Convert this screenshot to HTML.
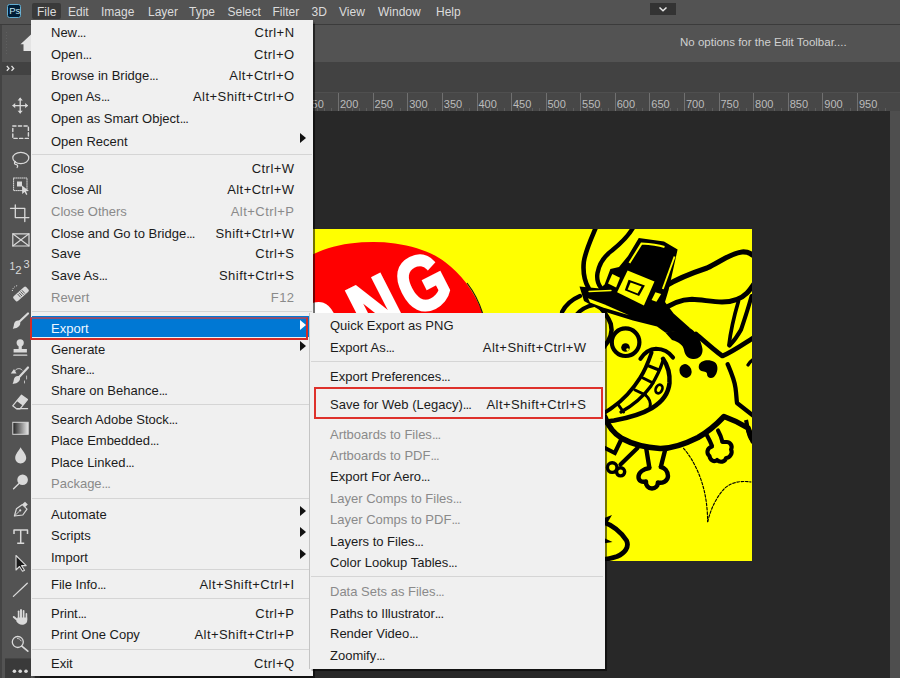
<!DOCTYPE html>
<html><head><meta charset="utf-8">
<style>
*{box-sizing:border-box;margin:0;padding:0}
html,body{width:900px;height:678px;overflow:hidden;background:#282828;font-family:"Liberation Sans",sans-serif}
.a{position:absolute}
.t{position:absolute;white-space:nowrap;font-family:"Liberation Sans",sans-serif}
.sep{position:absolute;height:1px;background:#d5d5d5}
.arr{position:absolute;width:0;height:0;border-top:5px solid transparent;border-bottom:5px solid transparent;border-left:6px solid #111}
.mb{position:absolute;top:0;font-size:12px;line-height:16px;color:#dcdcdc;white-space:nowrap}
.rl{position:absolute;top:98px;font-size:11px;line-height:13px;color:#bcbcbc;white-space:nowrap}
.tk{position:absolute;width:1px;background:#707070}
</style></head><body>
<!-- menubar -->
<div class="a" style="left:0;top:0;width:900px;height:24px;background:#535353"></div>
<div class="a" style="left:0;top:24px;width:900px;height:1px;background:#3b3b3b"></div>
<!-- ps logo -->
<div class="a" style="left:7px;top:4px;width:14px;height:14px;background:#001e36;border:1.2px solid #62aed2;border-radius:2.5px"></div>
<div class="t" style="left:9.3px;top:4px;font-size:9.5px;line-height:14px;color:#c4e8f6;letter-spacing:-0.1px">Ps</div>
<!-- File highlight -->
<div class="a" style="left:32px;top:3px;width:29px;height:16px;background:#3a3a3a;border-radius:2px"></div>
<div class="mb" style="left:37px;top:4px">File</div>
<div class="mb" style="left:68px;top:4px">Edit</div>
<div class="mb" style="left:101px;top:4px">Image</div>
<div class="mb" style="left:148px;top:4px">Layer</div>
<div class="mb" style="left:189px;top:4px">Type</div>
<div class="mb" style="left:227.5px;top:4px">Select</div>
<div class="mb" style="left:272.5px;top:4px">Filter</div>
<div class="mb" style="left:311.5px;top:4px">3D</div>
<div class="mb" style="left:339px;top:4px">View</div>
<div class="mb" style="left:378px;top:4px">Window</div>
<div class="mb" style="left:436px;top:4px">Help</div>
<!-- workspace dropdown -->
<div class="a" style="left:650px;top:3px;width:26px;height:12px;background:#333"></div>
<svg class="a" style="left:650px;top:3px" width="26" height="12"><path d="M9.5 4.5 L13 7.8 L16.5 4.5" stroke="#e8e8e8" stroke-width="1.5" fill="none"/></svg>

<!-- options bar -->
<div class="a" style="left:0;top:25px;width:900px;height:37px;background:#535353"></div>
<div class="t" style="left:680px;top:35px;font-size:11.5px;line-height:14px;color:#d0d0d0">No options for the Edit Toolbar....</div>
<!-- band -->
<div class="a" style="left:0;top:62px;width:900px;height:30px;background:#424242"></div>
<!-- ruler -->
<div class="a" style="left:0;top:92px;width:900px;height:19px;background:#474747"></div>
<div class="a" style="left:0;top:92px;width:900px;height:1px;background:#4f4f4f"></div>
<div class="tk" style="left:303.5px;top:93px;height:18px"></div>
<div class="rl" style="left:305.4px">150</div>
<div class="tk" style="left:310.3px;top:108px;height:3px;background:#5c5c5c"></div>
<div class="tk" style="left:317.2px;top:108px;height:3px;background:#5c5c5c"></div>
<div class="tk" style="left:324.2px;top:108px;height:3px;background:#5c5c5c"></div>
<div class="tk" style="left:331.1px;top:108px;height:3px;background:#5c5c5c"></div>
<div class="tk" style="left:338.1px;top:93px;height:18px"></div>
<div class="rl" style="left:340.0px">200</div>
<div class="tk" style="left:344.9px;top:108px;height:3px;background:#5c5c5c"></div>
<div class="tk" style="left:351.8px;top:108px;height:3px;background:#5c5c5c"></div>
<div class="tk" style="left:358.8px;top:108px;height:3px;background:#5c5c5c"></div>
<div class="tk" style="left:365.7px;top:108px;height:3px;background:#5c5c5c"></div>
<div class="tk" style="left:372.7px;top:93px;height:18px"></div>
<div class="rl" style="left:374.6px">250</div>
<div class="tk" style="left:379.5px;top:108px;height:3px;background:#5c5c5c"></div>
<div class="tk" style="left:386.4px;top:108px;height:3px;background:#5c5c5c"></div>
<div class="tk" style="left:393.3px;top:108px;height:3px;background:#5c5c5c"></div>
<div class="tk" style="left:400.3px;top:108px;height:3px;background:#5c5c5c"></div>
<div class="tk" style="left:407.3px;top:93px;height:18px"></div>
<div class="rl" style="left:409.2px">300</div>
<div class="tk" style="left:414.1px;top:108px;height:3px;background:#5c5c5c"></div>
<div class="tk" style="left:421.0px;top:108px;height:3px;background:#5c5c5c"></div>
<div class="tk" style="left:427.9px;top:108px;height:3px;background:#5c5c5c"></div>
<div class="tk" style="left:434.9px;top:108px;height:3px;background:#5c5c5c"></div>
<div class="tk" style="left:441.9px;top:93px;height:18px"></div>
<div class="rl" style="left:443.8px">350</div>
<div class="tk" style="left:448.7px;top:108px;height:3px;background:#5c5c5c"></div>
<div class="tk" style="left:455.6px;top:108px;height:3px;background:#5c5c5c"></div>
<div class="tk" style="left:462.5px;top:108px;height:3px;background:#5c5c5c"></div>
<div class="tk" style="left:469.4px;top:108px;height:3px;background:#5c5c5c"></div>
<div class="tk" style="left:476.5px;top:93px;height:18px"></div>
<div class="rl" style="left:478.4px">400</div>
<div class="tk" style="left:483.3px;top:108px;height:3px;background:#5c5c5c"></div>
<div class="tk" style="left:490.2px;top:108px;height:3px;background:#5c5c5c"></div>
<div class="tk" style="left:497.1px;top:108px;height:3px;background:#5c5c5c"></div>
<div class="tk" style="left:504.0px;top:108px;height:3px;background:#5c5c5c"></div>
<div class="tk" style="left:511.1px;top:93px;height:18px"></div>
<div class="rl" style="left:513.0px">450</div>
<div class="tk" style="left:517.9px;top:108px;height:3px;background:#5c5c5c"></div>
<div class="tk" style="left:524.8px;top:108px;height:3px;background:#5c5c5c"></div>
<div class="tk" style="left:531.7px;top:108px;height:3px;background:#5c5c5c"></div>
<div class="tk" style="left:538.6px;top:108px;height:3px;background:#5c5c5c"></div>
<div class="tk" style="left:545.6px;top:93px;height:18px"></div>
<div class="rl" style="left:547.5px">500</div>
<div class="tk" style="left:552.5px;top:108px;height:3px;background:#5c5c5c"></div>
<div class="tk" style="left:559.4px;top:108px;height:3px;background:#5c5c5c"></div>
<div class="tk" style="left:566.3px;top:108px;height:3px;background:#5c5c5c"></div>
<div class="tk" style="left:573.2px;top:108px;height:3px;background:#5c5c5c"></div>
<div class="tk" style="left:580.2px;top:93px;height:18px"></div>
<div class="rl" style="left:582.1px">550</div>
<div class="tk" style="left:587.0px;top:108px;height:3px;background:#5c5c5c"></div>
<div class="tk" style="left:594.0px;top:108px;height:3px;background:#5c5c5c"></div>
<div class="tk" style="left:600.9px;top:108px;height:3px;background:#5c5c5c"></div>
<div class="tk" style="left:607.8px;top:108px;height:3px;background:#5c5c5c"></div>
<div class="tk" style="left:614.8px;top:93px;height:18px"></div>
<div class="rl" style="left:616.7px">600</div>
<div class="tk" style="left:621.6px;top:108px;height:3px;background:#5c5c5c"></div>
<div class="tk" style="left:628.6px;top:108px;height:3px;background:#5c5c5c"></div>
<div class="tk" style="left:635.5px;top:108px;height:3px;background:#5c5c5c"></div>
<div class="tk" style="left:642.4px;top:108px;height:3px;background:#5c5c5c"></div>
<div class="tk" style="left:649.4px;top:93px;height:18px"></div>
<div class="rl" style="left:651.3px">650</div>
<div class="tk" style="left:656.2px;top:108px;height:3px;background:#5c5c5c"></div>
<div class="tk" style="left:663.1px;top:108px;height:3px;background:#5c5c5c"></div>
<div class="tk" style="left:670.1px;top:108px;height:3px;background:#5c5c5c"></div>
<div class="tk" style="left:677.0px;top:108px;height:3px;background:#5c5c5c"></div>
<div class="tk" style="left:684.0px;top:93px;height:18px"></div>
<div class="rl" style="left:685.9px">700</div>
<div class="tk" style="left:690.8px;top:108px;height:3px;background:#5c5c5c"></div>
<div class="tk" style="left:697.7px;top:108px;height:3px;background:#5c5c5c"></div>
<div class="tk" style="left:704.7px;top:108px;height:3px;background:#5c5c5c"></div>
<div class="tk" style="left:711.6px;top:108px;height:3px;background:#5c5c5c"></div>
<div class="tk" style="left:718.6px;top:93px;height:18px"></div>
<div class="rl" style="left:720.5px">750</div>
<div class="tk" style="left:725.4px;top:108px;height:3px;background:#5c5c5c"></div>
<div class="tk" style="left:732.3px;top:108px;height:3px;background:#5c5c5c"></div>
<div class="tk" style="left:739.2px;top:108px;height:3px;background:#5c5c5c"></div>
<div class="tk" style="left:746.2px;top:108px;height:3px;background:#5c5c5c"></div>
<div class="tk" style="left:753.2px;top:93px;height:18px"></div>
<div class="rl" style="left:755.1px">800</div>
<div class="tk" style="left:760.0px;top:108px;height:3px;background:#5c5c5c"></div>
<div class="tk" style="left:766.9px;top:108px;height:3px;background:#5c5c5c"></div>
<div class="tk" style="left:773.8px;top:108px;height:3px;background:#5c5c5c"></div>
<div class="tk" style="left:780.8px;top:108px;height:3px;background:#5c5c5c"></div>
<div class="tk" style="left:787.8px;top:93px;height:18px"></div>
<div class="rl" style="left:789.7px">850</div>
<div class="tk" style="left:794.6px;top:108px;height:3px;background:#5c5c5c"></div>
<div class="tk" style="left:801.5px;top:108px;height:3px;background:#5c5c5c"></div>
<div class="tk" style="left:808.4px;top:108px;height:3px;background:#5c5c5c"></div>
<div class="tk" style="left:815.3px;top:108px;height:3px;background:#5c5c5c"></div>
<div class="tk" style="left:822.4px;top:93px;height:18px"></div>
<div class="rl" style="left:824.3px">900</div>
<div class="tk" style="left:829.2px;top:108px;height:3px;background:#5c5c5c"></div>
<div class="tk" style="left:836.1px;top:108px;height:3px;background:#5c5c5c"></div>
<div class="tk" style="left:843.0px;top:108px;height:3px;background:#5c5c5c"></div>
<div class="tk" style="left:849.9px;top:108px;height:3px;background:#5c5c5c"></div>
<div class="tk" style="left:857.0px;top:93px;height:18px"></div>
<div class="rl" style="left:858.9px">950</div>
<div class="tk" style="left:863.8px;top:108px;height:3px;background:#5c5c5c"></div>
<div class="tk" style="left:870.7px;top:108px;height:3px;background:#5c5c5c"></div>
<div class="tk" style="left:877.6px;top:108px;height:3px;background:#5c5c5c"></div>
<div class="tk" style="left:884.5px;top:108px;height:3px;background:#5c5c5c"></div>

<!-- canvas right strip -->
<div class="a" style="left:890px;top:111px;width:10px;height:567px;background:#4e4e4e"></div>

<!-- left toolbar -->
<div class="a" style="left:0;top:25px;width:2px;height:653px;background:#434343"></div>
<svg class="a" style="left:0;top:25px" width="31" height="37"><path d="M6.5 7V29" stroke="#5f5f5f" stroke-width="1" stroke-dasharray="1 2"/><path d="M20.5 19.3L31 9.5L41.5 19.3H38.5V26H23.5V19.3Z" fill="#e4e4e4"/></svg>
<div class="a" style="left:2px;top:62px;width:38px;height:13px;background:#424242"></div>
<svg class="a" style="left:0;top:62px" width="31" height="13"><path d="M6.8 4L9 6.4L6.8 8.8M11.5 4L13.7 6.4L11.5 8.8" stroke="#e0e0e0" stroke-width="1.3" fill="none"/></svg>
<div class="a" style="left:2px;top:75px;width:38px;height:603px;background:#535353"></div>
<svg class="a" style="left:0;top:0" width="31" height="678" viewBox="0 0 31 678">
<g fill="none" stroke="#dadada" stroke-width="1.3" stroke-linecap="round" stroke-linejoin="round">
<!-- move -->
<path d="M20.2 98.5V112.8M13 105.6H27.4"/>
<path d="M20.2 97.6l-2.6 2.8h5.2zM20.2 113.6l-2.6-2.8h5.2zM12.4 105.6l2.8-2.6v5.2zM28 105.6l-2.8-2.6v5.2z" fill="#dadada" stroke="none"/>
<!-- marquee -->
<rect x="12.8" y="126" width="15.6" height="12.4" stroke-dasharray="3.2 2.4" stroke-width="1.4"/>
<!-- lasso -->
<ellipse cx="20.8" cy="158" rx="8" ry="5.6" stroke-width="1.2"/>
<path d="M15.5 161.5c-2 1.5-1 3 .8 3.2c1.5.2 1.8 1.5.8 2.8" stroke-width="1.2"/>
<!-- object select -->
<rect x="13.6" y="178" width="13.4" height="12.6" stroke-dasharray="1 1.1" stroke-width="1"/>
<path d="M17 181.5h5v5h-5z" fill="#dadada" stroke="none"/>
<path d="M22 185.5l7 5.5l-3.2.3l1.6 3l-1.2.6l-1.6-3l-2.4 2.2z" fill="#dadada" stroke="none"/>
<!-- crop -->
<path d="M10.5 208.3H24.8V221.5M15.3 205V217.6H28.9" stroke-width="1.3"/>
<!-- frame -->
<rect x="12.8" y="233.8" width="16.2" height="12.2" stroke-width="1.2"/>
<path d="M12.8 233.8L29 246M29 233.8L12.8 246" stroke-width="1.1"/>
<!-- brush -->
<path d="M28 313.5L19.5 321.5" stroke-width="2.2"/>
<path d="M19.8 320.8c-3 -1 -5.5 1 -5.8 3.5c-.3 2 -.8 3.6 -1.2 4.6c1.5-.3 3.3-.6 4.9-1.6c2.4-1.4 3.3-3.9 2.1-6.5z" fill="#dadada" stroke="none"/>
<!-- stamp -->
<circle cx="20.2" cy="342.8" r="3.6" fill="#dadada" stroke="none"/>
<path d="M18.6 345.5h3.2v3.8h-3.2z" fill="#dadada" stroke="none"/>
<path d="M13.6 349h13.3v3.6h-13.3z" fill="#dadada" stroke="none"/>
<path d="M13.8 355.2H26.8" stroke-width="1.2"/>
<!-- history brush -->
<path d="M28 367.5L19.2 377" stroke-width="2.2"/>
<path d="M19.5 376.2c-3-1-5.4 1-5.7 3.5c-.3 2-.8 3.3-1.2 4.3c1.5-.3 3.3-.6 4.9-1.6c2.4-1.4 3.3-3.7 2-6.2z" fill="#dadada" stroke="none"/>
<path d="M10.8 373.6l3.2-4.5l2.5 4.5z" fill="#dadada" stroke="none"/>
<path d="M15 370.5c2-2.5 5.5-2.5 7-.5" stroke-width="1"/>
<path d="M26.6 376v3M24.5 381v2" stroke-width="0.8"/>
<!-- eraser -->
<path d="M21.5 395.2l6 4.3l-7.5 9.3h-3.5l-3.8-3z" stroke-width="1.2"/>
<path d="M21.5 395.2l6 4.3l-4.8 6l-6-4.4z" fill="#dadada" stroke="none"/>
<path d="M17 408.6H27.6" stroke-width="1.2"/>
<!-- type T -->
<path d="M14 534v-4h13.5v4M20.7 530v13.3M17.2 543.3h7" stroke-width="1.5" stroke-linecap="butt"/>
<!-- path select arrow -->
<path d="M16 555.5v14.5l3.5-3.5l3 4.8l2-1.1l-3-4.6h4.7z" fill="#1a1a1a" stroke="#dadada" stroke-width="1.1"/>
<!-- line -->
<path d="M27.3 583.3L13.4 596.4" stroke-width="1.3"/>
<!-- zoom -->
<circle cx="17.8" cy="642" r="5.5" stroke-width="1.3"/>
<path d="M21.8 646.2l6 5" stroke-width="1.7"/>
<path d="M17.5 638.5c1.6 0 3 1 3.6 2.4" stroke-width="0.9"/>
</g>
<!-- 123 -->
<text x="9.6" y="269.8" font-family="Liberation Sans" font-size="10.5" fill="#dadada">1</text>
<text x="15.2" y="273.9" font-family="Liberation Sans" font-size="11.5" fill="#dadada">2</text>
<text x="23.6" y="267.7" font-family="Liberation Sans" font-size="11" fill="#dadada">3</text>
<!-- bandage -->
<g transform="translate(21,294) rotate(-42)">
<rect x="-8.5" y="-3.2" width="17" height="6.4" rx="1.5" fill="#dadada"/>
<path d="M-2.5 -2.2v4.4M-.6 -2.2v4.4M1.3 -2.2v4.4M3.2 -2.2v4.4" stroke="#535353" stroke-width="0.9"/>
</g>
<path d="M12.3 291c.3-3 2.6-5.2 5.8-5.5" fill="none" stroke="#dadada" stroke-width="1" stroke-dasharray="1 1.2"/>
<!-- gradient -->
<defs><linearGradient id="gr" x1="0" x2="1"><stop offset="0" stop-color="#222"/><stop offset="1" stop-color="#e6e6e6"/></linearGradient></defs>
<rect x="12.8" y="422.3" width="15.4" height="12" fill="url(#gr)" stroke="#d8d8d8" stroke-width="1"/>
<!-- drop -->
<path d="M20.6 447.2c-1.5 3-5.4 7-5.4 10.5c0 3.3 2.4 5.7 5.4 5.7s5.6-2.4 5.6-5.7c0-3.5-4-7.5-5.6-10.5z" fill="#dadada"/>
<!-- dodge -->
<circle cx="22.6" cy="479.8" r="5.3" fill="#dadada"/>
<path d="M19 483.6l-5.4 5.2" stroke="#dadada" stroke-width="1.4" stroke-linecap="round"/>
<!-- pen -->
<path d="M14.4 516l2-7.2l6-4.2l4.6 4.5l-4.2 5.9z" fill="none" stroke="#dadada" stroke-width="1.2" stroke-linejoin="round"/>
<path d="M22.3 504.3l2.7-2.6l2.8 2.8l-2.6 2.6z" fill="#dadada"/>
<circle cx="20.2" cy="510.4" r="1.1" fill="#dadada"/>
<path d="M14.6 515.8l5-4.8" stroke="#dadada" stroke-width="0.9"/>
<!-- hand -->
<g stroke="#dadada" stroke-linecap="round" fill="none">
<path d="M18.6 611.2V619" stroke-width="1.6"/>
<path d="M21 610V618.5" stroke-width="1.9"/>
<path d="M23.6 610.9V618.5" stroke-width="1.7"/>
<path d="M26.4 613.8V620" stroke-width="1.6"/>
<path d="M13.8 617L18 620.5" stroke-width="2"/>
</g>
<path d="M17.5 617.5H27.2V620.5C27.2 623 25 624.8 22 624.8C19.5 624.8 17.8 623.5 16.3 621.3z" fill="#dadada"/>
<!-- ... -->
<rect x="5" y="658.4" width="26" height="20" fill="#3a3a3a"/>
<circle cx="14.4" cy="671.2" r="1.8" fill="#dadada"/><circle cx="20.2" cy="671.2" r="1.8" fill="#dadada"/><circle cx="26" cy="671.2" r="1.8" fill="#dadada"/>
</svg>


<!-- image -->
<svg class="a" style="left:300px;top:229px" width="452" height="332" viewBox="300 229 452 332">
<rect x="300" y="229" width="452" height="332" fill="#ffff00"/>
<!-- red circle -->
<path d="M300 262 C310 254 330 246 350 243.5 C365 241.8 380 241.5 395 243.5 C415 246.5 432 252 445 262 C460 273 474 290 482.5 313 L482.5 330 L300 330 Z" fill="#ff0000"/>
<path d="M467 283 C474 292 479 302 482.5 313" fill="none" stroke="#111" stroke-width="1.1"/>
<!-- PNG text -->
<g fill="#fff" stroke="#fff" stroke-width="2.8" font-family="Liberation Sans" font-weight="bold" font-size="78"><text transform="translate(314,364) rotate(-27) scale(0.8,1)">P</text><text transform="translate(367,341) rotate(-27) scale(0.82,1)">N</text><text transform="translate(413,318) rotate(-27) scale(0.8,1)">G</text></g>

<g fill="none" stroke="#000" stroke-linecap="round" stroke-linejoin="round">
<!-- left arcs bottom -->
<path d="M562 312 C566 304 573 299 580 296" stroke-width="4.3"/>
<path d="M575 316 C580 310 587 306 594 305" stroke-width="3.9"/>
<!-- long strokes -->
<path d="M596.5 226 C592 237 585.5 250 583.8 262 C582.8 272 584.5 281 588.5 288" stroke-width="4.6"/>
<path d="M634 226 C629 236 620 244 612 250.5 C603 257 599 265 597.5 273 C596.5 279 598 284 601 288" stroke-width="4.4"/>
<!-- ear outline top -->
<path d="M665.5 286 C677 279 692 273 707 268 C720 262 731 253 742 252 C748 251.5 752 254 755 257" stroke-width="5.2"/>
<!-- ear outline bottom -->
<path d="M660 312 C670 304 681 299.5 692 299.3 C702 299.6 712 302 722 302 C732 302 741 299 747 293 C750 290 752 287 754 284" stroke-width="5"/>
<!-- body top diagonal -->
<path d="M696 334 C704 341 714 350 722.4 356 C732 352 742 345 753 338" stroke-width="4.7"/>
<!-- head left outline -->
<path d="M597 304 C603 310 608 316 610.8 324 C613 332 610 340 604 347" stroke-width="4.5"/>
<!-- eye -->
<circle cx="625.6" cy="342.2" r="13.8" stroke-width="4.2"/>
<!-- upper cheek arc -->
<path d="M640.4 358.8 C645 352 651 349 656 348.8 C663 349 669 352 673 357.5" stroke-width="4.1"/>
<!-- mouth teeth band outer -->
<path d="M651.6 352.5 C649 360 646 369 640 378 C633 389 623 400 613 407 C610 409.5 607 411 604 413" stroke-width="3.9"/>
<path d="M662.9 361 C660 370 656 378 651 386 C643 397 632 406 621 412" stroke-width="3.3"/>
<!-- lower lip -->
<path d="M663 358.8 C668 366 670 375 669.5 383 C668.5 393 662 402 652 408 C642 414 628 418 614 420.5 C610 421 606 421.5 603 422" stroke-width="4.5"/>
<!-- teeth dividers -->
<path d="M649 366 L659 370 M643 378 L653 383 M635 390 L645.5 395 M618.5 405 L623.5 412" stroke-width="3.0"/>
<path d="M645.5 395 C650 399 651 403 650 407" stroke-width="3.0"/>
<ellipse cx="659" cy="389" rx="3.2" ry="4.5" transform="rotate(25 659 389)" stroke-width="2.7"/>
<path d="M606.5 422.7 C608 425 609.5 427 611.5 428" stroke-width="3.7"/>
<!-- ear veins -->
<path d="M738.5 301 C735 313 731 327 729 345" stroke-width="3.7"/>
<path d="M751.6 296 C748 309 744 321 741 329.8 C737 337 733 342 729.5 345.5" stroke-width="4.1"/>
<!-- body right -->
<path d="M727.7 364.3 C731 372 734.5 380 735.5 388 C736.5 395 736.5 400 737 403 L753 415.5" stroke-width="4.3"/>
<path d="M748 365 C750 362 752 360 754 359" stroke-width="3.2"/>
<!-- body bottom -->
<path d="M605 417 C608 426 613 433 622 438.5 C632 444 645 447.5 660 448.5 C672 448.7 684 444.5 698 437.5 C706 433 715 426 724 416.5 C731 419 740 423 748 428 L753 441" stroke-width="5.5"/>
<!-- legs -->
<path d="M646 447 L649.4 468" stroke-width="4.4"/>
<path d="M665.5 448.5 L660.8 467" stroke-width="4.4"/>
<path d="M649.4 468 C644 469 638.5 472 638.5 477 C638.5 481 642 482.5 646 481.5 C645.5 485.5 648.5 488.5 652 488.5 C655.5 488.5 658 486 657.8 482.5 C662 483.5 668 481.5 668 476 C668 471 664.5 467.5 660.8 467" stroke-width="4.4" fill="#ffff00"/>
<path d="M706.5 434.5 C709 439 711 443 712.5 447" stroke-width="4.1"/>
<path d="M718 430.5 C720 434 721.5 438 722.5 442" stroke-width="4.1"/>
<path d="M712 446.5 C707 448 706 453 709.5 456 C710 460 714 462.5 717 460 C720 463 725 462 726 458 C730 458 733 453 731 449.5 C733 446 730 441.5 726 442 L722.5 442" stroke-width="4.1" fill="#ffff00"/>
<!-- far left foot -->
<path d="M621 440 L614.8 453 L603 447" stroke-width="4.2" stroke-linecap="butt" stroke-linejoin="miter"/>
<path d="M637.5 448 L620.5 464.5" stroke-width="4.2"/>
<circle cx="612.2" cy="467.6" r="4.8" stroke-width="3.4"/>
<circle cx="620.6" cy="471.8" r="4.1" stroke-width="3.4"/>
<!-- dashed lines -->
<path d="M683.6 448.3 C692 458 700 473 704 490 C706.5 500 707.5 511 707.7 521.6" stroke-width="1.15" stroke-dasharray="2.6 1.7"/>
<path d="M707.7 521.6 C711 508 717 496 725 488 C732 482 741 480.5 751 482" stroke-width="1.15" stroke-dasharray="2.6 1.7"/>
<!-- bottom left curve -->
<path d="M602 521.5 C612 525 621 532 626.5 540.5 C629.5 547 625 553 617 556.5 C612 558.2 606 559.3 601 559.8" stroke-width="4.8"/>
</g>
<path d="M603 537.5 L612.5 542 L603 543.5 Z M603 518.5 L612 515 L606 525 L603 524 Z" fill="#000"/>
<!-- right edge bits bottom right leg/body -->
<path d="M746 420 C748 428 748 436 752 440" fill="none" stroke="#000" stroke-width="4.1"/>

<!-- hat silhouette -->
<path d="M638.8 238 L664 241.6 L677.6 249.5 L668.6 290 L665 302 L673.6 313.4 L690.5 328.5 L682.6 331.1 L665.3 332.6 L657 326.5 L633 320.5 L600.6 310.5 L584 301 L579.5 286.5 L600 288.5 L604.6 284.5 L610.4 269 L619 267 L628 256 Z" fill="#000"/>
<!-- blob under brim -->
<path d="M665.3 332.6 L690.6 328.5 C697 333 701 340 702.5 349 C703 355 699 359.5 693 359 C688 358.5 685 356 684 350 C683 345 679 342 672 340 Z" fill="#000"/>
<!-- spots -->
<ellipse cx="685.5" cy="371" rx="6" ry="7" transform="rotate(-20 685.5 371)" fill="#000"/>
<path d="M699 365 C701 360 709 359 714.5 362 C719 365 718 373 714 377 C711 379 707 378 707 374 C707 371 703 372 700.5 370.5 C698.5 369 698.5 367 699 365 Z" fill="#000"/>
<!-- pupil -->
<circle cx="625.5" cy="347.5" r="4.3" fill="#000"/><circle cx="627.6" cy="349.6" r="1.3" fill="#ffff00"/>
<!-- hat yellow details -->
<g fill="#ffff00">
<path d="M627.6 270.6 L654.5 281.6 L643.9 305.6 L617.1 292.2 Z"/>
<path d="M612.3 274 L620 277.8 L616.1 287.4 L608 283.6 Z"/>
<path d="M655.4 292.2 L661.2 294.1 L656.4 301.8 L651.6 299.9 Z"/>
</g>
<path d="M628.6 279.7 L644.9 285.5 L639.1 296 L624.8 290.3 Z" fill="#000"/>
<path d="M630.6 282.6 L641.6 286.5 L637.6 293.4 L627.6 289.4 Z" fill="#ffff00"/>
<g fill="none" stroke="#ffff00" stroke-linecap="round">
<path d="M674.6 256.5 L662.8 289" stroke-width="1.9" stroke-linecap="butt"/>
<path d="M629.4 263 L641.5 243.6 C650 244.2 658 245.2 664.5 247" stroke-width="2" stroke-linecap="butt"/>

<path d="M589 291.5 L611 290.5" stroke-width="1.3"/>
</g><path d="M588 298.2 L604 304.2 L629 315.2 L603 307.6 L590 302.4 Z" fill="#ffff00"/><g>
</g>
</svg>


<!-- File menu -->
<div class="a" style="left:31px;top:20px;width:282px;height:656px;background:#f0f0f0;box-shadow:1.5px 1.5px 1px rgba(0,0,0,.55)"></div>
<div class="a" style="left:32px;top:316px;width:278px;height:21px;background:#0078d4"></div>
<div class="t" style="top:25px;font-size:13px;line-height:16px;color:#1b1b1b;left:51px;">New<span style="letter-spacing:-0.8px">...</span></div>
<div class="t" style="top:25px;font-size:13px;line-height:16px;color:#1b1b1b;letter-spacing:0.45px;right:605.5px;">Ctrl+N</div>
<div class="t" style="top:47px;font-size:13px;line-height:16px;color:#1b1b1b;left:51px;">Open<span style="letter-spacing:-0.8px">...</span></div>
<div class="t" style="top:47px;font-size:13px;line-height:16px;color:#1b1b1b;letter-spacing:0.45px;right:605.5px;">Ctrl+O</div>
<div class="t" style="top:68px;font-size:13px;line-height:16px;color:#1b1b1b;left:51px;">Browse in Bridge<span style="letter-spacing:-0.8px">...</span></div>
<div class="t" style="top:68px;font-size:13px;line-height:16px;color:#1b1b1b;letter-spacing:0.45px;right:605.5px;">Alt+Ctrl+O</div>
<div class="t" style="top:89px;font-size:13px;line-height:16px;color:#1b1b1b;left:51px;">Open As<span style="letter-spacing:-0.8px">...</span></div>
<div class="t" style="top:89px;font-size:13px;line-height:16px;color:#1b1b1b;letter-spacing:0.45px;right:605.5px;">Alt+Shift+Ctrl+O</div>
<div class="t" style="top:111px;font-size:13px;line-height:16px;color:#1b1b1b;left:51px;">Open as Smart Object<span style="letter-spacing:-0.8px">...</span></div>
<div class="t" style="top:134px;font-size:13px;line-height:16px;color:#1b1b1b;left:51px;">Open Recent</div>
<div class="arr" style="left:300px;top:133.4px;border-left-color:#111"></div>
<div class="sep" style="left:32px;width:280.0px;top:154px"></div>
<div class="t" style="top:161px;font-size:13px;line-height:16px;color:#1b1b1b;left:51px;">Close</div>
<div class="t" style="top:161px;font-size:13px;line-height:16px;color:#1b1b1b;letter-spacing:0.45px;right:605.5px;">Ctrl+W</div>
<div class="t" style="top:182px;font-size:13px;line-height:16px;color:#1b1b1b;left:51px;">Close All</div>
<div class="t" style="top:182px;font-size:13px;line-height:16px;color:#1b1b1b;letter-spacing:0.45px;right:605.5px;">Alt+Ctrl+W</div>
<div class="t" style="top:204px;font-size:13px;line-height:16px;color:#8a8a8a;left:51px;">Close Others</div>
<div class="t" style="top:204px;font-size:13px;line-height:16px;color:#8a8a8a;letter-spacing:0.45px;right:605.5px;">Alt+Ctrl+P</div>
<div class="t" style="top:226px;font-size:13px;line-height:16px;color:#1b1b1b;left:51px;">Close and Go to Bridge<span style="letter-spacing:-0.8px">...</span></div>
<div class="t" style="top:226px;font-size:13px;line-height:16px;color:#1b1b1b;letter-spacing:0.45px;right:605.5px;">Shift+Ctrl+W</div>
<div class="t" style="top:246px;font-size:13px;line-height:16px;color:#1b1b1b;left:51px;">Save</div>
<div class="t" style="top:246px;font-size:13px;line-height:16px;color:#1b1b1b;letter-spacing:0.45px;right:605.5px;">Ctrl+S</div>
<div class="t" style="top:268px;font-size:13px;line-height:16px;color:#1b1b1b;left:51px;">Save As<span style="letter-spacing:-0.8px">...</span></div>
<div class="t" style="top:268px;font-size:13px;line-height:16px;color:#1b1b1b;letter-spacing:0.45px;right:605.5px;">Shift+Ctrl+S</div>
<div class="t" style="top:290px;font-size:13px;line-height:16px;color:#8a8a8a;left:51px;">Revert</div>
<div class="t" style="top:290px;font-size:13px;line-height:16px;color:#8a8a8a;letter-spacing:0.45px;right:605.5px;">F12</div>
<div class="sep" style="left:32px;width:280.0px;top:311px"></div>
<div class="t" style="top:321px;font-size:13px;line-height:16px;color:#eef7ff;left:51px;">Export</div>
<div class="arr" style="left:300px;top:320.1px;border-left-color:#ffffff"></div>
<div class="t" style="top:342px;font-size:13px;line-height:16px;color:#1b1b1b;left:51px;">Generate</div>
<div class="arr" style="left:300px;top:341.4px;border-left-color:#111"></div>
<div class="t" style="top:362px;font-size:13px;line-height:16px;color:#1b1b1b;left:51px;">Share<span style="letter-spacing:-0.8px">...</span></div>
<div class="t" style="top:383px;font-size:13px;line-height:16px;color:#1b1b1b;left:51px;">Share on Behance<span style="letter-spacing:-0.8px">...</span></div>
<div class="sep" style="left:32px;width:280.0px;top:404px"></div>
<div class="t" style="top:412px;font-size:13px;line-height:16px;color:#1b1b1b;left:51px;">Search Adobe Stock<span style="letter-spacing:-0.8px">...</span></div>
<div class="t" style="top:433px;font-size:13px;line-height:16px;color:#1b1b1b;left:51px;">Place Embedded<span style="letter-spacing:-0.8px">...</span></div>
<div class="t" style="top:455px;font-size:13px;line-height:16px;color:#1b1b1b;left:51px;">Place Linked<span style="letter-spacing:-0.8px">...</span></div>
<div class="t" style="top:476px;font-size:13px;line-height:16px;color:#8a8a8a;left:51px;">Package<span style="letter-spacing:-0.8px">...</span></div>
<div class="sep" style="left:32px;width:280.0px;top:498px"></div>
<div class="t" style="top:507px;font-size:13px;line-height:16px;color:#1b1b1b;left:51px;">Automate</div>
<div class="arr" style="left:300px;top:506.1px;border-left-color:#111"></div>
<div class="t" style="top:528px;font-size:13px;line-height:16px;color:#1b1b1b;left:51px;">Scripts</div>
<div class="arr" style="left:300px;top:527.3px;border-left-color:#111"></div>
<div class="t" style="top:550px;font-size:13px;line-height:16px;color:#1b1b1b;left:51px;">Import</div>
<div class="arr" style="left:300px;top:549.2px;border-left-color:#111"></div>
<div class="sep" style="left:32px;width:280.0px;top:569px"></div>
<div class="t" style="top:577px;font-size:13px;line-height:16px;color:#1b1b1b;left:51px;">File Info<span style="letter-spacing:-0.8px">...</span></div>
<div class="t" style="top:577px;font-size:13px;line-height:16px;color:#1b1b1b;letter-spacing:0.45px;right:605.5px;">Alt+Shift+Ctrl+I</div>
<div class="sep" style="left:32px;width:280.0px;top:598px"></div>
<div class="t" style="top:606px;font-size:13px;line-height:16px;color:#1b1b1b;left:51px;">Print<span style="letter-spacing:-0.8px">...</span></div>
<div class="t" style="top:606px;font-size:13px;line-height:16px;color:#1b1b1b;letter-spacing:0.45px;right:605.5px;">Ctrl+P</div>
<div class="t" style="top:627px;font-size:13px;line-height:16px;color:#1b1b1b;left:51px;">Print One Copy</div>
<div class="t" style="top:627px;font-size:13px;line-height:16px;color:#1b1b1b;letter-spacing:0.45px;right:605.5px;">Alt+Shift+Ctrl+P</div>
<div class="sep" style="left:32px;width:280.0px;top:649px"></div>
<div class="t" style="top:656px;font-size:13px;line-height:16px;color:#1b1b1b;left:51px;">Exit</div>
<div class="t" style="top:656px;font-size:13px;line-height:16px;color:#1b1b1b;letter-spacing:0.45px;right:605.5px;">Ctrl+Q</div>

<!-- red box on Export -->
<div class="a" style="left:30px;top:317px;width:278px;height:23px;border:2px solid #d42c26;border-top-color:#8a4f72"></div>

<!-- Submenu -->
<div class="a" style="left:309px;top:313px;width:296px;height:356px;background:#f0f0f0;border-left:1px solid #c4c4c4;box-shadow:1.5px 1.5px 1px rgba(0,0,0,.55)"></div>
<div class="t" style="top:318px;font-size:13px;line-height:16px;color:#1b1b1b;left:330px;">Quick Export as PNG</div>
<div class="t" style="top:340px;font-size:13px;line-height:16px;color:#1b1b1b;left:330px;">Export As<span style="letter-spacing:-0.8px">...</span></div>
<div class="t" style="top:340px;font-size:13px;line-height:16px;color:#1b1b1b;letter-spacing:0.45px;right:313.5px;">Alt+Shift+Ctrl+W</div>
<div class="sep" style="left:311px;width:291.5px;top:361px"></div>
<div class="t" style="top:369px;font-size:13px;line-height:16px;color:#1b1b1b;left:330px;">Export Preferences<span style="letter-spacing:-0.8px">...</span></div>
<div class="t" style="top:397px;font-size:13px;line-height:16px;color:#1b1b1b;left:330px;">Save for Web (Legacy)<span style="letter-spacing:-0.8px">...</span></div>
<div class="t" style="top:397px;font-size:13px;line-height:16px;color:#1b1b1b;letter-spacing:0.45px;right:313.5px;">Alt+Shift+Ctrl+S</div>
<div class="t" style="top:427px;font-size:13px;line-height:16px;color:#8a8a8a;left:330px;">Artboards to Files<span style="letter-spacing:-0.8px">...</span></div>
<div class="t" style="top:448px;font-size:13px;line-height:16px;color:#8a8a8a;left:330px;">Artboards to PDF<span style="letter-spacing:-0.8px">...</span></div>
<div class="t" style="top:469px;font-size:13px;line-height:16px;color:#1b1b1b;left:330px;">Export For Aero<span style="letter-spacing:-0.8px">...</span></div>
<div class="t" style="top:491px;font-size:13px;line-height:16px;color:#8a8a8a;left:330px;">Layer Comps to Files<span style="letter-spacing:-0.8px">...</span></div>
<div class="t" style="top:512px;font-size:13px;line-height:16px;color:#8a8a8a;left:330px;">Layer Comps to PDF<span style="letter-spacing:-0.8px">...</span></div>
<div class="t" style="top:534px;font-size:13px;line-height:16px;color:#1b1b1b;left:330px;">Layers to Files<span style="letter-spacing:-0.8px">...</span></div>
<div class="t" style="top:555px;font-size:13px;line-height:16px;color:#1b1b1b;left:330px;">Color Lookup Tables<span style="letter-spacing:-0.8px">...</span></div>
<div class="sep" style="left:311px;width:291.5px;top:576px"></div>
<div class="t" style="top:584px;font-size:13px;line-height:16px;color:#8a8a8a;left:330px;">Data Sets as Files<span style="letter-spacing:-0.8px">...</span></div>
<div class="t" style="top:606px;font-size:13px;line-height:16px;color:#1b1b1b;left:330px;">Paths to Illustrator<span style="letter-spacing:-0.8px">...</span></div>
<div class="t" style="top:626px;font-size:13px;line-height:16px;color:#1b1b1b;left:330px;">Render Video<span style="letter-spacing:-0.8px">...</span></div>
<div class="t" style="top:648px;font-size:13px;line-height:16px;color:#1b1b1b;left:330px;">Zoomify<span style="letter-spacing:-0.8px">...</span></div>

<div class="a" style="left:313.5px;top:387px;width:289.5px;height:31.5px;border:2.7px solid #de312b"></div>
</body></html>
